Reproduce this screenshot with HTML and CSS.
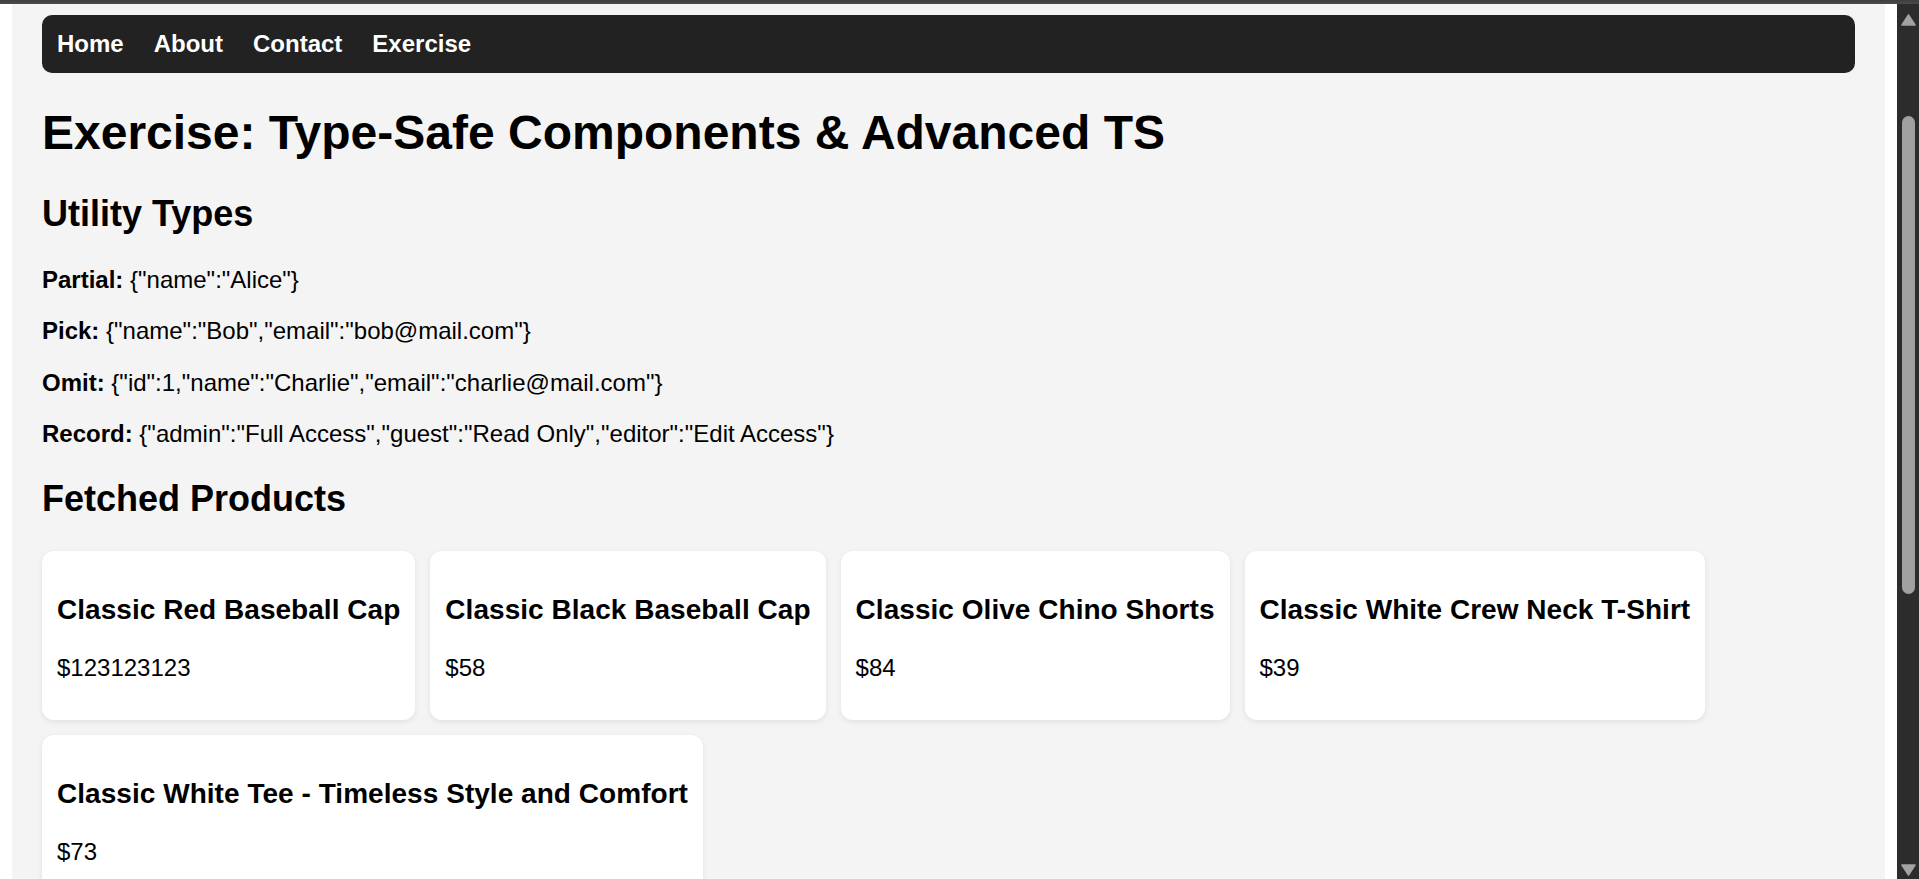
FILE: index.html
```html
<!DOCTYPE html>
<html lang="en">
<head>
<meta charset="utf-8">
<title>Exercise: Type-Safe Components &amp; Advanced TS</title>
<link rel="stylesheet" href="styles.css">
</head>
<body>
<div class="frame-top"></div>
<div class="viewport">
  <div class="page">
    <div class="container">
      <nav class="navbar">
        <a class="nav-link" href="#">Home</a>
        <a class="nav-link" href="#">About</a>
        <a class="nav-link" href="#">Contact</a>
        <a class="nav-link" href="#">Exercise</a>
      </nav>
      <h1 class="title">Exercise: Type-Safe Components &amp; Advanced TS</h1>
      <h2 class="section-title">Utility Types</h2>
      <p class="line"><strong>Partial:</strong> {"name":"Alice"}</p>
      <p class="line"><strong>Pick:</strong> {"name":"Bob","email":"bob@mail.com"}</p>
      <p class="line"><strong>Omit:</strong> {"id":1,"name":"Charlie","email":"charlie@mail.com"}</p>
      <p class="line"><strong>Record:</strong> {"admin":"Full Access","guest":"Read Only","editor":"Edit Access"}</p>
      <h2 class="section-title">Fetched Products</h2>
      <div class="products">
        <div class="card">
          <h3 class="card-title">Classic Red Baseball Cap</h3>
          <p class="card-price">$123123123</p>
        </div>
        <div class="card">
          <h3 class="card-title">Classic Black Baseball Cap</h3>
          <p class="card-price">$58</p>
        </div>
        <div class="card">
          <h3 class="card-title">Classic Olive Chino Shorts</h3>
          <p class="card-price">$84</p>
        </div>
        <div class="card">
          <h3 class="card-title">Classic White Crew Neck T-Shirt</h3>
          <p class="card-price">$39</p>
        </div>
        <div class="card">
          <h3 class="card-title">Classic White Tee - Timeless Style and Comfort</h3>
          <p class="card-price">$73</p>
        </div>
      </div>
    </div>
  </div>
  <div class="scrollbar">
    <svg class="sb-arrow" width="15" height="12" viewBox="0 0 15 12"><path d="M7.5 1 L14 11 L1 11 Z" fill="#a3a3a3" stroke="#a3a3a3" stroke-width="1.5" stroke-linejoin="round"/></svg>
    <div class="sb-thumb"></div>
    <div class="sb-spacer"></div>
    <svg class="sb-arrow sb-arrow-down" width="15" height="12" viewBox="0 0 15 12"><path d="M1 1 L14 1 L7.5 11 Z" fill="#a3a3a3" stroke="#a3a3a3" stroke-width="1.5" stroke-linejoin="round"/></svg>
  </div>
</div>
</body>
</html>
```
FILE: styles.css
```css
html, body {
  margin: 0;
  padding: 0;
  height: 100%;
  overflow: hidden;
  background: #ffffff;
}

body {
  font-family: "Liberation Sans", Arial, sans-serif;
  color: #000000;
  font-size: 24px;
  display: flex;
  flex-direction: column;
}

.frame-top {
  height: 4px;
  flex: none;
  background: linear-gradient(#3f3f3f, #4a4a4a);
}

.viewport {
  flex: 1;
  min-height: 0;
  display: flex;
  overflow: hidden;
}

.page {
  flex: 1;
  min-width: 0;
  padding: 0 12px;
  background: #ffffff;
}

.container {
  background: #f4f4f4;
  padding: 11px 30px 40px;
  min-height: 100%;
}

.navbar {
  background: #222222;
  border-radius: 10px;
  padding: 15px;
  display: flex;
  gap: 30px;
}

.nav-link {
  color: #ffffff;
  font-weight: bold;
  font-size: 24px;
  text-decoration: none;
  line-height: 27.6px;
}

.title {
  font-size: 48px;
  font-weight: bold;
  margin: 32px 0 33px;
  line-height: 55px;
}

.section-title {
  font-size: 36px;
  font-weight: bold;
  margin: 30px 0 31.5px;
  line-height: 41.4px;
}

.line {
  margin: 24px 0;
  line-height: 27.6px;
}

.products {
  display: flex;
  flex-wrap: wrap;
  gap: 15px;
  margin-top: 30px;
  align-items: flex-start;
}

.card {
  background: #ffffff;
  border-radius: 12px;
  padding: 15px;
  box-shadow: 0 2px 6px rgba(0, 0, 0, 0.08);
}

.card-title {
  font-size: 28px;
  font-weight: bold;
  margin: 28px 0;
  line-height: 32px;
  white-space: nowrap;
  letter-spacing: 0.04px;
}

.card-price {
  margin: 24px 0;
  line-height: 27.6px;
}

.scrollbar {
  width: 22px;
  flex: none;
  background: #2c2c2c;
  display: flex;
  flex-direction: column;
  align-items: center;
  padding-top: 10px;
  padding-bottom: 3px;
  box-sizing: border-box;
}

.sb-arrow {
  display: block;
  flex: none;
}

.sb-thumb {
  width: 13px;
  height: 478px;
  margin-top: 90px;
  border-radius: 7px;
  background: #a0a0a0;
  flex: none;
}

.sb-spacer {
  flex: 1;
}
```
